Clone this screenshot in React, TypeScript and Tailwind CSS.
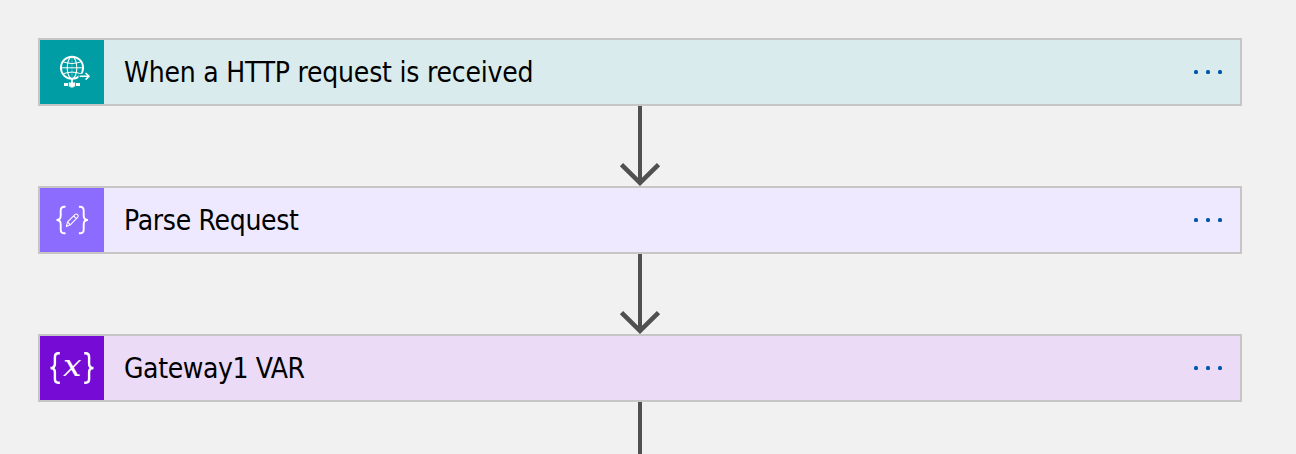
import type { ReactNode } from "react";

function HttpIcon() {
  return (
    <svg viewBox="0 0 64 64" className="size-16" fill="none" stroke="white">
      <circle cx="32" cy="27.8" r="11.1" strokeWidth="1.9" />
      <ellipse cx="32" cy="27.8" rx="4.8" ry="11" strokeWidth="1.1" />
      <path d="M32 17v22" strokeWidth="0.3" />
      <path d="M21 27.8h22M23.2 21.8q8.8 3.4 17.6 0M23.2 33.8q8.8-3.4 17.6 0" strokeWidth="1" />
      <path d="M38.5 36.3H49" stroke="#009da5" strokeWidth="5" />
      <path d="M39.7 36.3h9M45.6 33l3.4 3.3-3.4 3.3" strokeWidth="1.5" />
      <path d="M32 38v5" strokeWidth="1.6" />
      <path d="M24 43h4v3h-4zM36 43h4v3h-4zM28.8 42.4h6.4v4h-6.4zM30.5 46h3v1.6h-3z" fill="white" stroke="none" />
    </svg>
  );
}

function ParseIcon() {
  return (
    <svg viewBox="0 0 64 64" className="size-16" fill="none" stroke="white">
      <path
        d="M25.5 18.8h-1.1q-3.7 0-3.7 3.8v5.2q0 4.2-4.2 4.2 4.2 0 4.2 4.2v5.2q0 3.8 3.7 3.8h1.1M38.9 18.8H40q3.7 0 3.7 3.8v5.2q0 4.2 4.2 4.2-4.2 0-4.2 4.2v5.2q0 3.8-3.7 3.8h-1.1"
        strokeWidth="1.9"
      />
      <path
        d="M26.4 38.4l1.2-4.5 7.5-7.5q1.2-1 2.5.2t.2 2.5l-7.5 7.7zM27.6 33.9l2.7 2.9M33.6 27.8l2.8 2.8"
        strokeWidth="1.05"
        strokeLinejoin="round"
      />
    </svg>
  );
}

function VariableIcon() {
  return (
    <svg viewBox="0 0 64 64" className="size-16" fill="none" stroke="white">
      <path
        d="M19.8 17.2h-1.6q-3.3 0-3.3 3.7v6.8q0 4.3-4.4 4.3 4.4 0 4.4 4.3v6.8q0 3.7 3.3 3.7h1.6M44.2 17.2h1.6q3.3 0 3.3 3.7v6.8q0 4.3 4.4 4.3-4.4 0-4.4 4.3v6.8q0 3.7-3.3 3.7h-1.6"
        strokeWidth="2.4"
      />
      <text
        transform="translate(32 39.8) scale(1.13 1)"
        textAnchor="middle"
        fill="white"
        stroke="none"
        className="font-['DejaVu_Math_TeX_Gyre','Liberation_Serif',serif] text-[29px]"
      >
        {"\u{1D465}"}
      </text>
    </svg>
  );
}

function Step({ icon, iconClass, cardClass, title, titleClass }: {
  icon: ReactNode;
  iconClass: string;
  cardClass: string;
  title: string;
  titleClass: string;
}) {
  return (
    <div className={`flex h-[68px] w-full shrink-0 items-center border-2 border-[#c8c6c4] ${cardClass}`}>
      <div className={`size-16 shrink-0 ${iconClass}`}>{icon}</div>
      <span className={`ml-5 flex-1 whitespace-nowrap pt-0.5 text-[28px] leading-8 text-black ${titleClass}`}>{title}</span>
      <button aria-label="More actions" className="mr-[18px] flex gap-2">
        <span className="size-1 rounded-[1.5px] bg-[#0058ad]" />
        <span className="size-1 rounded-[1.5px] bg-[#0058ad]" />
        <span className="size-1 rounded-[1.5px] bg-[#0058ad]" />
      </button>
    </div>
  );
}

function Arrow() {
  return (
    <svg viewBox="0 0 44 80" className="h-20 w-11 shrink-0" fill="none" stroke="#505050" strokeWidth="4">
      <path d="M22 0v77" />
      <path d="M3.5 58.6L22 76.8l18.5-18.2" strokeWidth="4.6" />
    </svg>
  );
}

export default function App() {
  return (
    <main className="flex h-[454px] w-full flex-col items-center overflow-hidden bg-[#f1f1f1] pt-[38px] pr-[54px] pl-[38px] font-['DejaVu_Sans_Condensed','DejaVu_Sans',sans-serif] [font-stretch:condensed]">
      <Step icon={<HttpIcon />} iconClass="bg-[#009da5]" cardClass="bg-[#d9ebed]" title="When a HTTP request is received" titleClass="tracking-[-0.22px]" />
      <Arrow />
      <Step icon={<ParseIcon />} iconClass="bg-[#8c6cff]" cardClass="bg-[#eee9ff]" title="Parse Request" titleClass="tracking-[-0.3px]" />
      <Arrow />
      <Step icon={<VariableIcon />} iconClass="bg-[#770bd6]" cardClass="bg-[#ebdbf7]" title="Gateway1 VAR" titleClass="tracking-[-0.4px]" />
      <Arrow />
    </main>
  );
}
